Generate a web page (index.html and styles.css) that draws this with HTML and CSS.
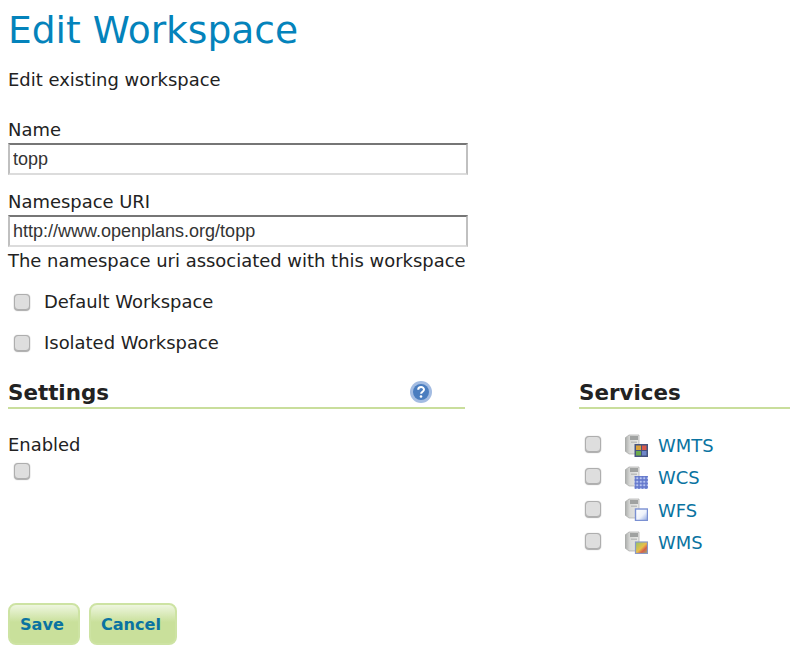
FILE: index.html
```html
<!DOCTYPE html>
<html lang="en">
<head>
<meta charset="utf-8">
<title>Edit Workspace</title>
<link rel="stylesheet" href="styles.css">
</head>
<body>
<svg class="defs" width="0" height="0" aria-hidden="true">
  <defs>
    <linearGradient id="srv" x1="0" x2="1" y1="0" y2="0"><stop offset="0" stop-color="#a8aaa8"/><stop offset=".35" stop-color="#d8d9d7"/><stop offset="1" stop-color="#e8e8e6"/></linearGradient>
    <linearGradient id="wfsg" x1="0" x2="1" y1="0" y2="1"><stop offset="0" stop-color="#ffffff"/><stop offset=".55" stop-color="#eef2fb"/><stop offset="1" stop-color="#8fa6e0"/></linearGradient>
    <linearGradient id="wmsg" x1="0" x2="1" y1="0" y2="1"><stop offset="0" stop-color="#8fc46a"/><stop offset=".5" stop-color="#e8c04a"/><stop offset=".7" stop-color="#d8604a"/><stop offset="1" stop-color="#8fb870"/></linearGradient>
    <pattern id="wcsp" width="3.5" height="3.5" patternUnits="userSpaceOnUse"><rect width="3.5" height="3.5" fill="#6478cc"/><circle cx="1.75" cy="1.75" r="1.2" fill="#b9c6f2"/></pattern>
    <symbol id="server" viewBox="0 0 23 23">
      <path d="M0 4 4 1h10v19H4l-4-3z" fill="url(#srv)" stroke="#a9aba9" stroke-width=".7"/>
      <rect x="5" y="2" width="8" height="4" fill="#a0a2a1"/>
      <rect x="6" y="7.5" width="6" height="1.5" fill="#bcbebd"/>
    </symbol>
  </defs>
</svg>
<main class="page">
  <h1 class="title">Edit Workspace</h1>
  <p class="intro">Edit existing workspace</p>
  <form class="form">
    <div class="field">
      <label class="label" for="name">Name</label>
      <input class="text" id="name" type="text" value="topp">
    </div>
    <div class="field field-uri">
      <label class="label" for="uri">Namespace URI</label>
      <input class="text" id="uri" type="text" value="http://www.openplans.org/topp">
      <p class="hint">The namespace uri associated with this workspace</p>
    </div>
    <label class="check check-first"><input class="box" type="checkbox"><span>Default Workspace</span></label>
    <label class="check"><input class="box" type="checkbox"><span>Isolated Workspace</span></label>
    <div class="columns">
      <section class="settings">
        <div class="head">
          <h2 class="heading">Settings</h2>
          <svg class="help" width="22" height="22" viewBox="0 0 22 22" aria-hidden="true">
            <circle cx="11" cy="11" r="11" fill="#a3bce2"/>
            <circle cx="11" cy="11" r="8" fill="#4a7dbf"/>
            <path d="M8.2 8.8c0-3.6 5.8-3.6 5.8-.2 0 2.2-2.9 2.2-2.9 4.2" fill="none" stroke="#fff" stroke-width="2"/>
            <circle cx="11" cy="15.5" r="1.3" fill="#fff"/>
          </svg>
        </div>
        <label class="label label-enabled" for="enabled">Enabled</label>
        <input class="box box-enabled" id="enabled" type="checkbox">
      </section>
      <section class="services">
        <h2 class="heading heading-line">Services</h2>
        <ul class="list">
          <li class="service"><input class="box" type="checkbox">
            <svg class="icon" width="23" height="23" viewBox="0 0 23 23" aria-hidden="true"><use href="#server"/><rect x="9.5" y="10" width="13.5" height="13" fill="#46547f"/><rect x="11" y="11.5" width="5" height="4.5" fill="#d9a23c"/><rect x="17" y="11.5" width="4.5" height="4.5" fill="#d8584a"/><rect x="11" y="17" width="5" height="4.5" fill="#6cab4c"/><rect x="17" y="17" width="4.5" height="4.5" fill="#6f87c9"/></svg>
            <a class="link" href="#">WMTS</a></li>
          <li class="service"><input class="box" type="checkbox">
            <svg class="icon" width="23" height="23" viewBox="0 0 23 23" aria-hidden="true"><use href="#server"/><rect x="9.5" y="10" width="13.5" height="13" fill="url(#wcsp)"/></svg>
            <a class="link" href="#">WCS</a></li>
          <li class="service"><input class="box" type="checkbox">
            <svg class="icon" width="23" height="23" viewBox="0 0 23 23" aria-hidden="true"><use href="#server"/><rect x="10.5" y="11" width="12" height="11.5" fill="url(#wfsg)" stroke="#7a90d2" stroke-width="1.4"/></svg>
            <a class="link" href="#">WFS</a></li>
          <li class="service"><input class="box" type="checkbox">
            <svg class="icon" width="23" height="23" viewBox="0 0 23 23" aria-hidden="true"><use href="#server"/><rect x="10.5" y="11" width="12" height="11.5" fill="url(#wmsg)" stroke="#8a98c6" stroke-width="1.2"/></svg>
            <a class="link" href="#">WMS</a></li>
        </ul>
      </section>
    </div>
    <div class="actions">
      <a class="button" href="#">Save</a>
      <a class="button" href="#">Cancel</a>
    </div>
  </form>
</main>
</body>
</html>
```
FILE: styles.css
```css
html, body { margin: 0; padding: 0; background: #fff; }
body { font-family: "DejaVu Sans", sans-serif; font-size: 17.96px; line-height: 22px; color: #222; overflow: hidden; }
.defs { position: absolute; }
.page { padding: 0 0 0 8px; }
.title { margin: 0; padding-top: 8px; font-size: 37.6px; line-height: 44px; font-weight: 400; color: #0483bb; }
.intro { margin: 17px 0 0; }
.form { margin: 0; }
.field { margin-top: 28px; }
.field-uri { margin-top: 16px; }
.label { display: block; line-height: 22px; padding-bottom: 2px; }
.text { display: block; box-sizing: border-box; width: 460px; height: 32px; margin: 0; padding: 0 3px; border-style: solid; border-width: 2px; border-color: #767676 #c0c0c0 #dcdcdc #c0c0c0; font-family: "Liberation Sans", sans-serif; font-size: 18px; color: #333; outline: none; background: #fff; }
.hint { margin: 3px 0 0; }
.check { display: flex; align-items: center; gap: 14px; margin: 19px 0 0 6px; height: 22px; }
.box { appearance: none; display: block; flex: none; box-sizing: border-box; width: 16px; height: 16px; margin: 0; border: 1px solid #aeaeae; border-radius: 4px; background: #dedede; box-shadow: 0 1px 1px #aaa, 0 0 1px #aaa; }
.columns { display: flex; margin-top: 17px; }
.settings { width: 457px; }
.services { width: 211px; margin-left: 114px; }
.head { display: flex; justify-content: space-between; border-bottom: 2px solid #c9de9c; height: 36px; padding-right: 33px; }
.heading { margin: 0; padding-top: 6px; box-sizing: border-box; font-size: 21.4px; line-height: 31px; font-weight: 700; color: #222; height: 36px; }
.heading-line { height: 38px; border-bottom: 2px solid #c9de9c; }
.help { margin-top: 10px; filter: blur(.4px); }
.label-enabled { margin-top: 25px; padding-bottom: 0; }
.box-enabled { margin: 7px 0 0 6px; }
.list { margin: 20px 0 0; padding: 0; list-style: none; }
.service { display: flex; align-items: center; height: 32.3px; padding-left: 6px; }
.service .box { margin-bottom: 2px; }
.icon { margin-left: 24px; filter: blur(.5px); }
.link { margin: 2px 0 0 10px; color: #0a73a1; text-decoration: none; }
.actions { display: flex; gap: 9px; margin-top: 45px; }
.button { box-sizing: border-box; display: block; height: 42px; padding: 0 14px 0 10px; line-height: 40px; border: 2px solid #cde3a3; border-radius: 8px; background: linear-gradient(#eef6df, #c9e09b 45%, #c9e09b); color: #0a73a1; font-weight: 700; font-size: 16.13px; text-decoration: none; }
```
